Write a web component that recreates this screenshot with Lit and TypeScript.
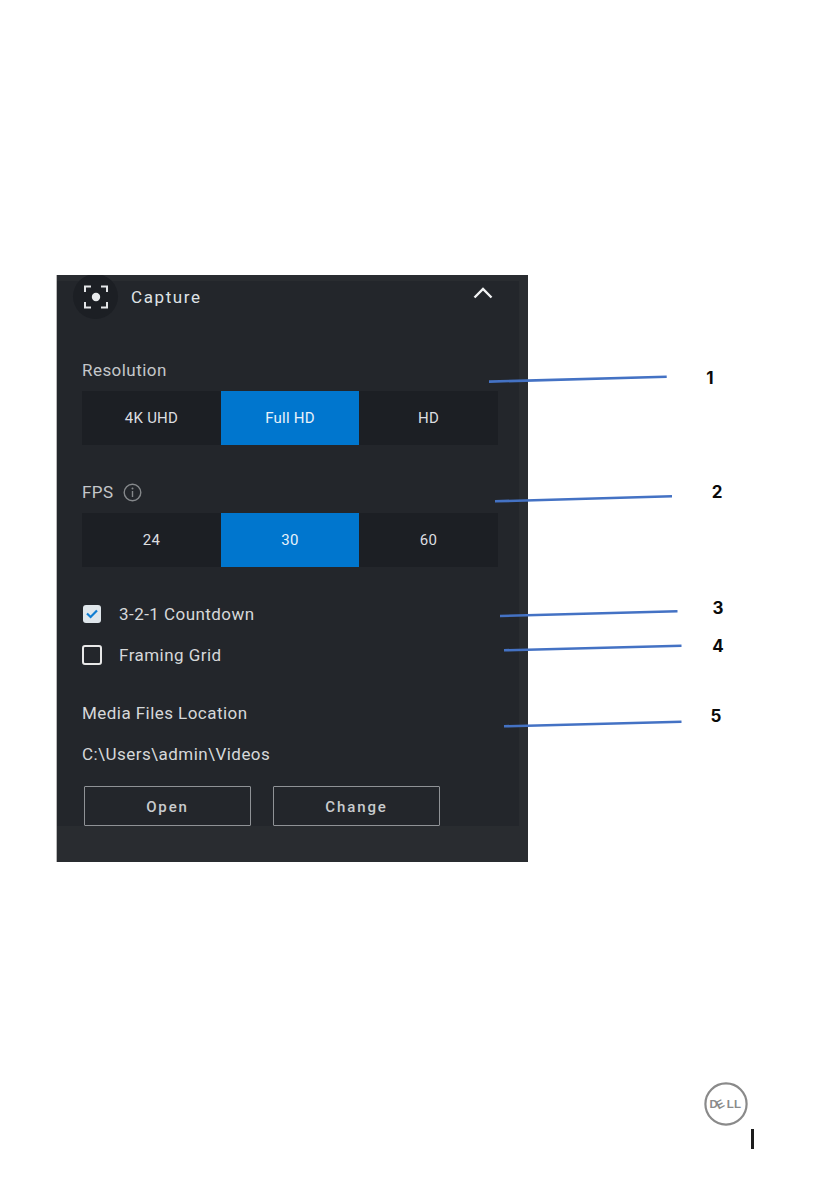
import { LitElement, html, css, svg } from "lit";
import { customElement } from "lit/decorators.js";

const LINES = [
  [489, 381.6, 666.7, 376.7],
  [495, 501.3, 672, 496.3],
  [500, 616, 677.5, 611.3],
  [504, 650.3, 681.5, 645.7],
  [504, 726.3, 681.5, 721.7],
];
const NUMS = [
  ["1", 710, 378],
  ["2", 717, 492],
  ["3", 718, 608],
  ["4", 718, 646],
  ["5", 716, 716],
];

@customElement("app-root")
export class AppRoot extends LitElement {
  static styles = css`
    :host {
      display: block;
      position: relative;
      width: 839px;
      height: 1191px;
      background: #fff;
      overflow: hidden;
      font-family: Roboto, "Liberation Sans", sans-serif;
    }
    .page {
      display: flex;
      flex-direction: column;
      padding: 275px 0 0 57px;
    }
    .panel {
      width: 471px;
      height: 587px;
      background: #292c30;
      overflow: hidden;
      box-shadow: -1px 0 0 #b9b9b9;
    }
    .inner {
      margin-top: 6px;
      width: 462px;
      height: 545px;
      background: #23262b;
      display: flex;
      flex-direction: column;
    }
    .header {
      display: flex;
      align-items: flex-start;
      height: 52px;
      padding: 0 26px 0 16px;
      flex: none;
    }
    .circle {
      width: 45px;
      height: 45px;
      margin-top: -7px;
      border-radius: 50%;
      background: #1c1f24;
      flex: none;
      display: flex;
      align-items: center;
      justify-content: center;
    }
    .title {
      margin: 6px 0 0 13px;
      line-height: 20px;
      font-size: 17px;
      letter-spacing: 1.6px;
      color: #dfe3e6;
      flex: 1;
    }
    .chev {
      margin-top: 5px;
    }
    .body {
      display: flex;
      flex-direction: column;
      padding: 0 21px 0 25px;
    }
    .label {
      line-height: 20px;
      font-size: 17px;
      letter-spacing: 0.45px;
      color: #c4c7ca;
    }
    .label.bright {
      color: #d6d8da;
    }
    .res {
      margin-top: 27px;
    }
    .fps {
      margin-top: 37px;
      display: flex;
      align-items: center;
      gap: 9px;
    }
    .seg {
      margin-top: 11px;
      height: 54px;
      display: grid;
      grid-template-columns: 139px 138px 139px;
      background: #1c1f24;
    }
    .seg div {
      display: flex;
      align-items: center;
      justify-content: center;
      font-size: 15px;
      letter-spacing: 0.25px;
      color: #dcdee0;
    }
    .seg .on {
      background: #0076ce;
      color: #e8f2fa;
    }
    .check {
      display: flex;
      align-items: center;
      height: 20px;
      line-height: 20px;
      font-size: 17px;
      letter-spacing: 0.45px;
      color: #d6d8da;
    }
    .check.first {
      margin-top: 37px;
    }
    .check.second {
      margin-top: 21px;
    }
    .box {
      width: 20px;
      height: 20px;
      box-sizing: border-box;
      border: 2px solid #e8e8e8;
      border-radius: 3px;
      margin-right: 17px;
      flex: none;
    }
    .box.on {
      width: 18px;
      height: 18px;
      margin: 0 18px 0 1px;
      border: none;
      background: #dfe6eb;
      display: flex;
      align-items: center;
      justify-content: center;
    }
    .media {
      margin-top: 38px;
    }
    .path {
      margin-top: 21px;
    }
    .buttons {
      margin: 22px 0 0 2px;
      display: flex;
      gap: 22px;
    }
    .btn {
      width: 167px;
      height: 40px;
      box-sizing: border-box;
      border: 1px solid #8f9296;
      border-radius: 1px;
      padding-top: 1px;
      display: flex;
      align-items: center;
      justify-content: center;
      font-size: 15px;
      font-weight: 500;
      letter-spacing: 1.9px;
      color: #c9ccce;
    }
    .logo {
      margin: 220px 0 0 647px;
      width: 44px;
      height: 44px;
    }
    .bar {
      margin: 3px 0 0 694px;
      width: 3px;
      height: 20px;
      background: #1d1d1d;
    }
    .overlay {
      position: absolute;
      inset: 0;
      width: 839px;
      height: 1191px;
      pointer-events: none;
    }
    .num {
      position: absolute;
      transform: translate(-50%, -50%);
      font-family: Inter, "Liberation Sans", sans-serif;
      font-size: 17px;
      font-weight: 700;
      line-height: 20px;
      color: #0a0a0a;
    }
    .logo text {
      font-family: "Liberation Sans", sans-serif;
      font-weight: 700;
      font-size: 11.5px;
      fill: #8a8a8a;
    }
  `;

  private segment(items: string[]) {
    return html`<div class="seg">
      ${items.map((t, i) => html`<div class=${i === 1 ? "on" : ""}>${t}</div>`)}
    </div>`;
  }

  render() {
    return html`
      <div class="page">
        <div class="panel">
          <div class="inner">
            <div class="header">
              <div class="circle">
                <svg width="24" height="24" viewBox="0 0 24 24" fill="none">
                  <path
                    d="M1 7V1.5H7M17 1.5H23V7M1 17V22.5H7M17 22.5H23V17"
                    stroke="#e4e6e8"
                    stroke-width="2"
                  />
                  <circle cx="12" cy="12" r="4.2" fill="#e8eaec" />
                </svg>
              </div>
              <div class="title">Capture</div>
              <svg class="chev" width="20" height="14" viewBox="0 0 20 14" fill="none">
                <path d="M1.5 11.5L10 3L18.5 11.5" stroke="#f2f3f4" stroke-width="2.4" />
              </svg>
            </div>
            <div class="body">
              <div class="label res">Resolution</div>
              ${this.segment(["4K UHD", "Full HD", "HD"])}
              <div class="label fps">
                <span>FPS</span>
                <svg width="19" height="19" viewBox="0 0 19 19" fill="none">
                  <circle cx="9.5" cy="9.5" r="8.3" stroke="#85888b" stroke-width="1.4" />
                  <path d="M9.5 8V14" stroke="#85888b" stroke-width="1.4" />
                  <circle cx="9.5" cy="5.5" r="1" fill="#85888b" />
                </svg>
              </div>
              ${this.segment(["24", "30", "60"])}
              <div class="check first">
                <div class="box on">
                  <svg width="12" height="10" viewBox="0 0 12 10" fill="none">
                    <path d="M1 4.5L4.6 8L11 1.5" stroke="#0f7dd2" stroke-width="2.2" />
                  </svg>
                </div>
                3-2-1 Countdown
              </div>
              <div class="check second">
                <div class="box"></div>
                Framing Grid
              </div>
              <div class="label bright media">Media Files Location</div>
              <div class="label bright path">C:\\Users\\admin\\Videos</div>
              <div class="buttons">
                <div class="btn">Open</div>
                <div class="btn">Change</div>
              </div>
            </div>
          </div>
        </div>
        <svg class="logo" viewBox="0 0 44 44" fill="none">
          <circle cx="22" cy="22" r="20.6" stroke="#8a8a8a" stroke-width="2.2" />
          <text x="5.4" y="26.2">D</text>
          <text transform="translate(14.6 27.4) rotate(-28)">E</text>
          <text x="22.8" y="26.2">L</text>
          <text x="30" y="26.2">L</text>
        </svg>
        <div class="bar"></div>
      </div>
      <svg class="overlay" viewBox="0 0 839 1191" fill="none">
        ${LINES.map(
          ([a, b, c, d]) =>
            svg`<line x1=${a} y1=${b} x2=${c} y2=${d} stroke="#4472c4" stroke-width="2.6" />`
        )}
      </svg>
      ${NUMS.map(
        ([t, x, y]) => html`<div class="num" style="left:${x}px;top:${y}px">${t}</div>`
      )}
    `;
  }
}
